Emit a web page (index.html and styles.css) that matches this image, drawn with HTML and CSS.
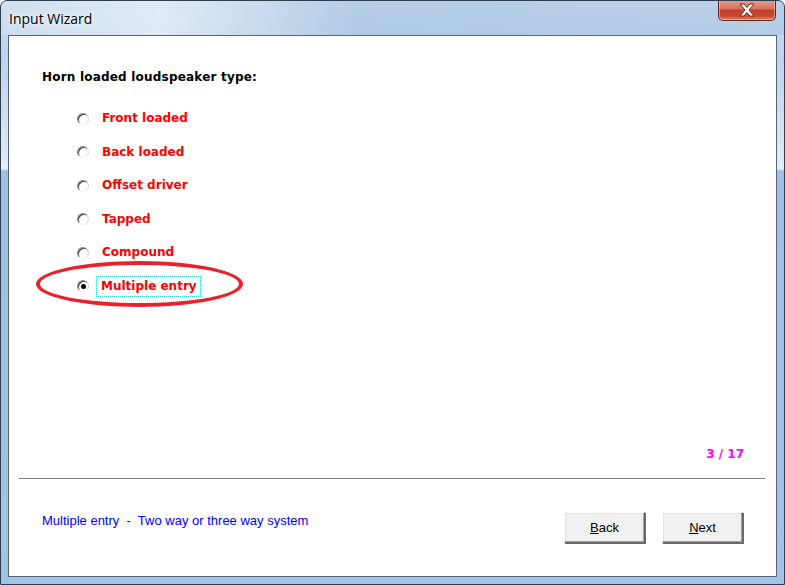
FILE: index.html
```html
<!DOCTYPE html>
<html>
<head>
<meta charset="utf-8">
<link rel="stylesheet" href="styles.css">
</head>
<body>
<div class="window">
  <div class="titlebar">
    <span class="title">Input Wizard</span>
    <div class="close">
      <svg width="20" height="14" viewBox="0 0 20 14"><path d="M3 1 L7 1 L10 4.5 L13 1 L17 1 L12 7 L17 13 L13 13 L10 9.5 L7 13 L3 13 L8 7 Z" fill="#fff" stroke="#6b2a22" stroke-width="1" stroke-linejoin="round"/></svg>
    </div>
  </div>
  <div class="client">
    <div class="main">
      <div class="heading">Horn loaded loudspeaker type:</div>
      <ul class="options">
        <li class="opt"><span class="radio"></span><span class="label">Front loaded</span></li>
        <li class="opt"><span class="radio"></span><span class="label">Back loaded</span></li>
        <li class="opt"><span class="radio"></span><span class="label">Offset driver</span></li>
        <li class="opt"><span class="radio"></span><span class="label">Tapped</span></li>
        <li class="opt"><span class="radio"></span><span class="label">Compound</span></li>
        <li class="opt selected"><span class="radio checked"></span><span class="label focus">Multiple entry</span><span class="ellipse"></span></li>
      </ul>
      <div class="page">3 / 17</div>
    </div>
    <div class="sep"></div>
    <div class="footer">
      <div class="desc">Multiple entry&nbsp; -&nbsp; Two way or three way system</div>
      <div class="buttons">
        <button class="btn"><u>B</u>ack</button>
        <button class="btn"><u>N</u>ext</button>
      </div>
    </div>
  </div>
</div>
</body>
</html>
```
FILE: styles.css
```css
* { box-sizing: border-box; }
html, body { margin: 0; padding: 0; background: #fff; }
.window {
  width: 785px;
  height: 585px;
  display: flex;
  flex-direction: column;
  border: 1px solid #2f3d4f;
  border-radius: 7px 7px 0 0;
  background: linear-gradient(to bottom, #c7dbef 0px, #bfd4eb 60px, #dbe7f4 150px, #e6eef8 168px, #9fc0e4 170px, #a4c3e6 585px);
  overflow: hidden;
}
.titlebar {
  height: 34px;
  position: relative;
  display: flex;
  align-items: flex-start;
  background: linear-gradient(to right, rgba(255,255,255,0.15), rgba(255,255,255,0.45) 20%, rgba(140,175,210,0.3) 45%, rgba(140,175,210,0.25) 100%);
}
.title {
  font-family: "Open Sans", "Liberation Sans", sans-serif;
  font-size: 14px;
  color: #000;
  margin: 8px 0 0 8px;
  text-shadow: 0 0 8px #fff, 0 0 4px #fff;
}
.close {
  position: absolute;
  right: 8px;
  top: -1px;
  width: 58px;
  height: 21px;
  border: 1px solid #6b2418;
  border-top: none;
  border-radius: 0 0 5px 5px;
  background: linear-gradient(to bottom, #e5a08f 0%, #d7705c 45%, #c0402a 50%, #c84a30 80%, #d9826a 100%);
  display: flex;
  align-items: center;
  justify-content: center;
  box-shadow: inset 0 0 0 1px rgba(255,210,200,0.5);
}
.client {
  flex: 1;
  margin: 0 7px 7px 7px;
  background: #fff;
  border: 1px solid #54647a;
  display: flex;
  flex-direction: column;
  font-family: "Liberation Sans", Arial, sans-serif;
}
.main {
  flex: 1;
  position: relative;
  padding: 34px 0 0 33px;
}
.heading {
  font-family: "DejaVu Sans", sans-serif;
  font-weight: bold;
  font-size: 12px;
  letter-spacing: 0.2px;
  color: #000;
  height: 16px;
}
.options {
  list-style: none;
  margin: 16px 0 0 0;
  padding: 0 0 0 35px;
}
.opt {
  position: relative;
  display: flex;
  align-items: center;
  height: 33.5px;
}
.radio {
  width: 12px;
  height: 12px;
  border-radius: 50%;
  border: 1px solid;
  border-color: #8a8a8a #d8d8d8 #f2f2f2 #8a8a8a;
  background: #fff;
  box-shadow: inset 1px 1px 0 #404040;
  margin-right: 12px;
  position: relative;
}
.radio.checked::after {
  content: "";
  position: absolute;
  left: 2.5px;
  top: 2.5px;
  width: 5px;
  height: 5px;
  border-radius: 50%;
  background: #000;
}
.label {
  font-family: "DejaVu Sans", sans-serif;
  color: #ff0000;
  font-weight: bold;
  font-size: 12px;
  padding: 2px 2px 3px 2px;
  margin-left: -2px;
  border: 1px solid transparent;
}
.label.focus {
  margin-left: -5px;
  padding: 2px 3px 3px 4px;
  border: 1px dotted #1a1a1a;
  outline: 1px dotted #2fd6d6;
  outline-offset: -1px;
}
.ellipse {
  position: absolute;
  left: -41px;
  top: -9px;
  width: 207px;
  height: 46px;
  border: 4px solid #e8222c;
  border-radius: 50%;
}
.page {
  font-family: "DejaVu Sans", sans-serif;
  position: absolute;
  right: 32px;
  bottom: 17px;
  color: #ff00ff;
  font-weight: bold;
  font-size: 12px;
}
.sep {
  height: 1px;
  background: #7a7a7a;
  margin: 0 11px 0 10px;
}
.footer {
  height: 97px;
  display: flex;
  justify-content: space-between;
  padding: 34px 33px 0 33px;
}
.desc {
  color: #0000ff;
  font-size: 13px;
  margin-top: 0px;
}
.buttons {
  display: flex;
  gap: 17px;
}
.btn {
  width: 81px;
  height: 31px;
  background: #f0f0f0;
  border: 1px solid;
  border-color: #ffffff #6a6a6a #6a6a6a #ffffff;
  box-shadow: 1px 1px 0 #6a6a6a, inset -1px -1px 0 #a0a0a0, inset 1px 1px 0 #e3e3e3;
  font-family: "Liberation Sans", Arial, sans-serif;
  font-size: 13px;
  color: #000;
  padding: 0;
  margin-top: -1px;
}
```
